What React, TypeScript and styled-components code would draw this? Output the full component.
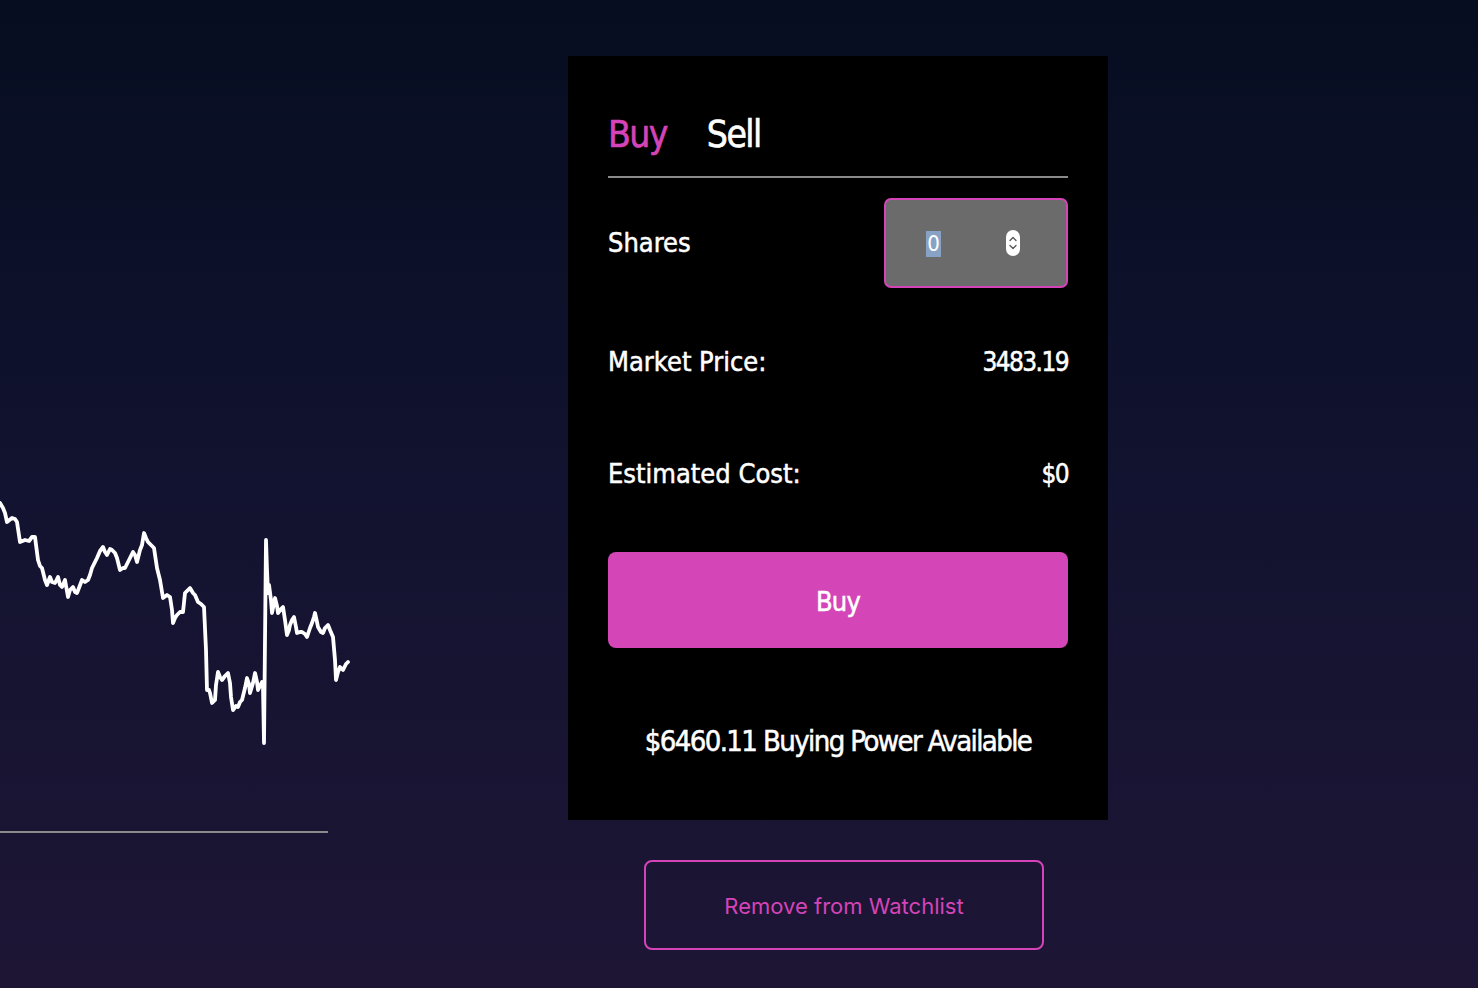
import React from "react";
import styled, { createGlobalStyle } from "styled-components";

const GlobalStyle = createGlobalStyle`
  html, body {
    margin: 0;
    padding: 0;
  }
  body {
    background: linear-gradient(180deg, #060d20 0%, #121330 50%, #1e1535 100%);
    min-height: 988px;
    font-family: "DejaVu Sans Condensed", "DejaVu Sans", sans-serif;
    color: #ffffff;
  }
`;

const Page = styled.div`
  display: flex;
  width: 1478px;
  height: 988px;
  box-sizing: border-box;
  padding-top: 56px;
  overflow: hidden;
`;

const ChartColumn = styled.div`
  width: 568px;
  flex-shrink: 0;
  padding-top: 424px;
`;

const ChartSvg = styled.svg`
  display: block;
`;

const TradeColumn = styled.div`
  display: flex;
  flex-direction: column;
  align-items: flex-start;
`;

const Card = styled.section`
  width: 540px;
  height: 764px;
  box-sizing: border-box;
  background: #000000;
  padding: 54px 40px 0 40px;
  display: flex;
  flex-direction: column;
`;

const Tabs = styled.div`
  display: flex;
  gap: 40px;
  padding-bottom: 16px;
  border-bottom: 2px solid #8a8a8a;
`;

const Tab = styled.span<{ $active?: boolean }>`
  font-size: 37px;
  line-height: 50px;
  font-weight: 400;
  letter-spacing: -1.6px;
  -webkit-text-stroke: 0.6px currentColor;
  color: ${(p) => (p.$active ? "#d444b8" : "#ffffff")};
`;

const Row = styled.div<{ $mt: number; $h: number }>`
  display: flex;
  align-items: center;
  justify-content: space-between;
  margin-top: ${(p) => p.$mt}px;
  height: ${(p) => p.$h}px;
`;

const Label = styled.span`
  font-size: 27px;
  line-height: 40px;
  -webkit-text-stroke: 0.5px currentColor;
  letter-spacing: 0;
`;

const Value = styled.span`
  font-size: 26px;
  line-height: 40px;
  -webkit-text-stroke: 0.5px currentColor;
  letter-spacing: -1.6px;
`;

const ShareInput = styled.div`
  width: 184px;
  height: 90px;
  box-sizing: border-box;
  background: #6b6b6b;
  border: 2px solid #d444b8;
  border-radius: 7px;
  display: flex;
  align-items: center;
  padding-left: 40px;
  gap: 64px;
`;

const Selected = styled.span`
  display: inline-flex;
  align-items: center;
  justify-content: center;
  width: 15px;
  height: 26px;
  margin-top: 2px;
  background: #88a2c6;
  color: #ffffff;
  font-size: 22px;
  line-height: 26px;
`;

const SpinnerIcon = styled.svg`
  display: block;
`;

const PrimaryButton = styled.button`
  margin-top: 58px;
  width: 460px;
  height: 96px;
  border: none;
  border-radius: 8px;
  background: #d445b7;
  color: #ffffff;
  font-family: "DejaVu Sans Condensed", "DejaVu Sans", sans-serif;
  font-size: 27px;
  letter-spacing: -0.8px;
  -webkit-text-stroke: 0.5px currentColor;
  padding: 0;
  padding-top: 2px;
`;

const PowerText = styled.p`
  margin: 73px 0 0 0;
  text-align: center;
  font-size: 29px;
  line-height: 40px;
  -webkit-text-stroke: 0.5px currentColor;
  letter-spacing: -1.6px;
`;

const WatchButton = styled.button`
  margin-top: 40px;
  margin-left: 76px;
  width: 400px;
  height: 90px;
  box-sizing: border-box;
  background: transparent;
  border: 2px solid #d444b8;
  border-radius: 8px;
  color: #d444b8;
  font-family: Inter, "Liberation Sans", sans-serif;
  font-size: 22px;
  font-weight: 400;
  padding: 0;
  padding-top: 2px;
`;

const chartPoints: [number, number][] = [
  [0, 503], [3, 508], [5, 513], [7, 522], [12, 518], [15, 519], [17, 522],
  [20, 542], [25, 540], [29, 541], [32, 537], [35, 537], [38, 560], [40, 566],
  [42, 568], [45, 580], [47, 585], [50, 577], [52, 582], [55, 583], [58, 577],
  [60, 585], [62, 587], [65, 580], [68, 597], [70, 590], [73, 587], [75, 592],
  [77, 593], [82, 580], [85, 582], [88, 580], [90, 575], [92, 568], [95, 562],
  [97, 558], [100, 551], [103, 547], [105, 552], [107, 555], [110, 549],
  [112, 550], [115, 553], [117, 558], [120, 570], [123, 568], [125, 568],
  [128, 562], [131, 556], [133, 552], [135, 555], [137, 562], [140, 550],
  [142, 545], [144, 533], [146, 538], [148, 542], [151, 545], [154, 548],
  [157, 568], [160, 580], [162, 592], [163, 598], [167, 595], [170, 597],
  [172, 610], [173, 623], [175, 618], [177, 615], [180, 612], [183, 612],
  [185, 593], [188, 590], [190, 588], [193, 593], [195, 595], [198, 602],
  [201, 604], [204, 607], [206, 650], [207, 690], [209, 690], [210, 693],
  [212, 703], [215, 700], [216, 685], [218, 672], [220, 677], [222, 680],
  [225, 676], [228, 673], [230, 683], [231, 697], [233, 710], [236, 706],
  [238, 707], [240, 702], [242, 700], [245, 688], [247, 678], [249, 684],
  [250, 693], [253, 683], [255, 673], [257, 682], [258, 690], [260, 686],
  [262, 682], [263, 687], [264, 743], [265, 640], [266, 540], [267, 570],
  [268, 593], [269, 585], [271, 600], [272, 613], [274, 603], [275, 598],
  [277, 606], [278, 613], [281, 609], [283, 607], [285, 620], [287, 635],
  [289, 630], [290, 625], [292, 620], [294, 617], [296, 627], [297, 633],
  [300, 632], [302, 632], [305, 634], [307, 637], [310, 628], [312, 623],
  [314, 617], [315, 613], [317, 622], [318, 627], [321, 632], [323, 633],
  [325, 628], [328, 625], [330, 630], [333, 637], [335, 660], [336, 680],
  [338, 672], [340, 667], [343, 670], [346, 664], [348, 662],
];

const Chart: React.FC = () => (
  <ChartSvg width={360} height={370} viewBox="0 480 360 370">
    <polyline
      points={chartPoints.map(([x, y]) => `${x},${y}`).join(" ")}
      fill="none"
      stroke="#ffffff"
      strokeWidth={3.8}
      strokeLinejoin="round"
      strokeLinecap="round"
    />
    <line x1={0} y1={832} x2={328} y2={832} stroke="#8a8a8a" strokeWidth={2} />
  </ChartSvg>
);

const Spinner: React.FC = () => (
  <SpinnerIcon width={16} height={28} viewBox="0 0 16 28">
    <rect x={1} y={1} width={14} height={26} rx={7} fill="#ffffff" />
    <path d="M5 11.5 L8 8.5 L11 11.5" fill="none" stroke="#5a5a5a" strokeWidth={1.4} strokeLinecap="round" strokeLinejoin="round" />
    <path d="M5 16.5 L8 19.5 L11 16.5" fill="none" stroke="#5a5a5a" strokeWidth={1.4} strokeLinecap="round" strokeLinejoin="round" />
  </SpinnerIcon>
);

const App: React.FC = () => (
  <>
    <GlobalStyle />
    <Page>
      <ChartColumn>
        <Chart />
      </ChartColumn>
      <TradeColumn>
        <Card>
          <Tabs>
            <Tab $active>Buy</Tab>
            <Tab>Sell</Tab>
          </Tabs>
          <Row $mt={20} $h={90}>
            <Label>Shares</Label>
            <ShareInput>
              <Selected>0</Selected>
              <Spinner />
            </ShareInput>
          </Row>
          <Row $mt={54} $h={40}>
            <Label>Market Price:</Label>
            <Value>3483.19</Value>
          </Row>
          <Row $mt={72} $h={40}>
            <Label>Estimated Cost:</Label>
            <Value>$0</Value>
          </Row>
          <PrimaryButton>Buy</PrimaryButton>
          <PowerText>$6460.11 Buying Power Available</PowerText>
        </Card>
        <WatchButton>Remove from Watchlist</WatchButton>
      </TradeColumn>
    </Page>
  </>
);

export default App;
